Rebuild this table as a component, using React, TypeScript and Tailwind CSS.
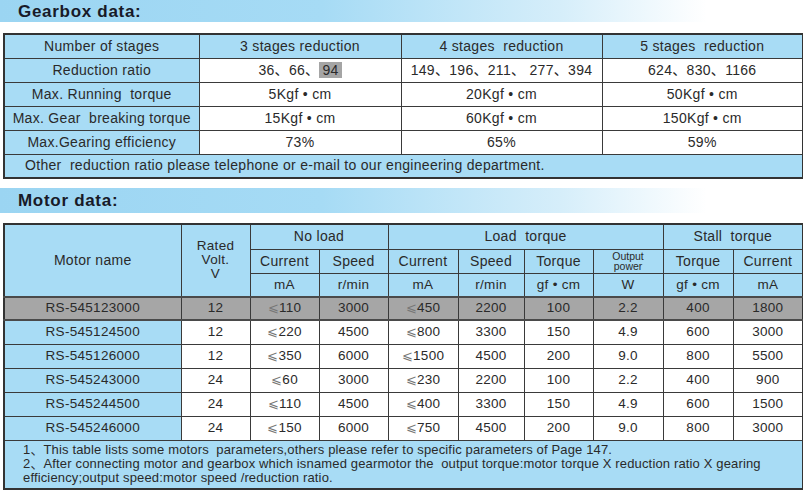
import React from "react";

const BLUE = "bg-[#a8dcf5]";

const gearRows: { label: string; cells: React.ReactNode[] }[] = [
  {
    label: "Reduction ratio",
    cells: [
      <span key="a">
        36、66、<span className="bg-[#a5a5a5] px-[3px]">94</span>
      </span>,
      "149、196、211、 277、394",
      "624、830、1166",
    ],
  },
  { label: "Max. Running  torque", cells: ["5Kgf • cm", "20Kgf • cm", "50Kgf • cm"] },
  { label: "Max. Gear  breaking torque", cells: ["15Kgf • cm", "60Kgf • cm", "150Kgf • cm"] },
  { label: "Max.Gearing efficiency", cells: ["73%", "65%", "59%"] },
];

const motors = [
  ["RS-545123000", "12", "⩽110", "3000", "⩽450", "2200", "100", "2.2", "400", "1800"],
  ["RS-545124500", "12", "⩽220", "4500", "⩽800", "3300", "150", "4.9", "600", "3000"],
  ["RS-545126000", "12", "⩽350", "6000", "⩽1500", "4500", "200", "9.0", "800", "5500"],
  ["RS-545243000", "24", "⩽60", "3000", "⩽230", "2200", "100", "2.2", "400", "900"],
  ["RS-545244500", "24", "⩽110", "4500", "⩽400", "3300", "150", "4.9", "600", "1500"],
  ["RS-545246000", "24", "⩽150", "6000", "⩽750", "4500", "200", "9.0", "800", "3000"],
];

function SectionBar({ title, h }: { title: string; h: string }) {
  return (
    <div
      className={`${h} flex items-center pl-[18px] bg-[linear-gradient(to_right,#9bd5f2_0%,#a6dbf5_40%,#d6eefa_70%,#ffffff_88%)]`}
    >
      <h2 className="text-[17px] font-bold tracking-[0.7px] text-[#181a28] leading-none">{title}</h2>
    </div>
  );
}

function Val({ v }: { v: string }) {
  if (v.startsWith("⩽")) {
    return (
      <span>
        <span className="font-['DejaVu_Sans'] font-extralight text-[#777] text-[13px]">⩽</span>
        {v.slice(1)}
      </span>
    );
  }
  return <>{v}</>;
}

export default function App() {
  const cell = "border border-[#3a3a3a] text-center p-0 align-middle";
  return (
    <div className="w-[803px] h-[495px] bg-white overflow-hidden text-[#2a2a2a] font-['Liberation_Sans','Noto_Sans_CJK_SC',sans-serif]">
      <SectionBar title="Gearbox data:" h="h-[22px]" />

      <div className="pl-[3px] pt-[11px]">
        <table className="table-fixed border-collapse border-2 border-[#333] w-[799px] text-[14px] tracking-[0.3px] whitespace-pre">
          <colgroup>
            <col className="w-[195px]" />
            <col className="w-[202px]" />
            <col className="w-[201px]" />
            <col className="w-[201px]" />
          </colgroup>
          <tbody>
            <tr className={`h-[24px] ${BLUE}`}>
              <td className={cell}>Number of stages</td>
              <td className={cell}>3 stages reduction</td>
              <td className={cell}>4 stages  reduction</td>
              <td className={cell}>5 stages  reduction</td>
            </tr>
            {gearRows.map((r) => (
              <tr key={r.label} className="h-[24px]">
                <td className={`${cell} ${BLUE}`}>{r.label}</td>
                {r.cells.map((c, i) => (
                  <td key={i} className={`${cell} bg-white`}>
                    {c}
                  </td>
                ))}
              </tr>
            ))}
            <tr className={`h-[24px] ${BLUE}`}>
              <td colSpan={4} className={`${cell} text-left pl-[20px]`}>
                Other  reduction ratio please telephone or e-mail to our engineering department.
              </td>
            </tr>
          </tbody>
        </table>
      </div>

      <div className="mt-[9px]">
        <SectionBar title="Motor data:" h="h-[25px]" />
      </div>

      <div className="pl-[3px] pt-[10px]">
        <table className="table-fixed border-collapse border-2 border-[#333] w-[799px] text-[13.5px] tracking-[0.3px] whitespace-pre">
          <colgroup>
            <col className="w-[177px]" />
            <col className="w-[69px]" />
            <col className="w-[69px]" />
            <col className="w-[69px]" />
            <col className="w-[70px]" />
            <col className="w-[66px]" />
            <col className="w-[69px]" />
            <col className="w-[70px]" />
            <col className="w-[70px]" />
            <col className="w-[70px]" />
          </colgroup>
          <tbody>
            <tr className={`h-[25px] ${BLUE} text-[14px]`}>
              <td rowSpan={3} className={cell}>
                Motor name
              </td>
              <td rowSpan={3} className={`${cell} text-[13.5px] leading-[14px] pb-[2px]`}>
                Rated
                <br />
                Volt.
                <br />V
              </td>
              <td colSpan={2} className={cell}>
                No load
              </td>
              <td colSpan={4} className={cell}>
                Load  torque
              </td>
              <td colSpan={2} className={cell}>
                Stall  torque
              </td>
            </tr>
            <tr className={`h-[24px] ${BLUE} text-[14px]`}>
              <td className={cell}>Current</td>
              <td className={cell}>Speed</td>
              <td className={cell}>Current</td>
              <td className={cell}>Speed</td>
              <td className={cell}>Torque</td>
              <td className={`${cell} text-[10.5px] leading-[10px] tracking-[0px]`}>
                Output
                <br />
                power
              </td>
              <td className={cell}>Torque</td>
              <td className={cell}>Current</td>
            </tr>
            <tr className={`h-[24px] ${BLUE} text-[13.5px]`}>
              <td className={cell}>mA</td>
              <td className={cell}>r/min</td>
              <td className={cell}>mA</td>
              <td className={cell}>r/min</td>
              <td className={cell}>gf • cm</td>
              <td className={cell}>W</td>
              <td className={cell}>gf • cm</td>
              <td className={cell}>mA</td>
            </tr>
            {motors.map((m, ri) => {
              const gray = ri === 0;
              return (
                <tr key={m[0]} className={gray ? "h-[23px]" : "h-[24px]"}>
                  {m.map((v, ci) => (
                    <td
                      key={ci}
                      className={`${cell} ${
                        gray
                          ? "bg-[#a6a6a6] border-y-2 border-y-[#4a4a4a]"
                          : ci === 0
                          ? BLUE
                          : "bg-white"
                      }`}
                    >
                      <Val v={v} />
                    </td>
                  ))}
                </tr>
              );
            })}
            <tr className={`h-[49px] ${BLUE}`}>
              <td
                colSpan={10}
                className={`${cell} text-left pl-[18px] pr-[4px] text-[13px] leading-[14px] tracking-[0.15px] whitespace-normal`}
              >
                <div className="whitespace-pre-wrap">
                  {"1、This table lists some motors  parameters,others please refer to specific parameters of Page 147.\n2、After connecting motor and gearbox which isnamed gearmotor the  output torque:motor torque X reduction ratio X gearing\nefficiency;output speed:motor speed /reduction ratio."}
                </div>
              </td>
            </tr>
          </tbody>
        </table>
      </div>
    </div>
  );
}
